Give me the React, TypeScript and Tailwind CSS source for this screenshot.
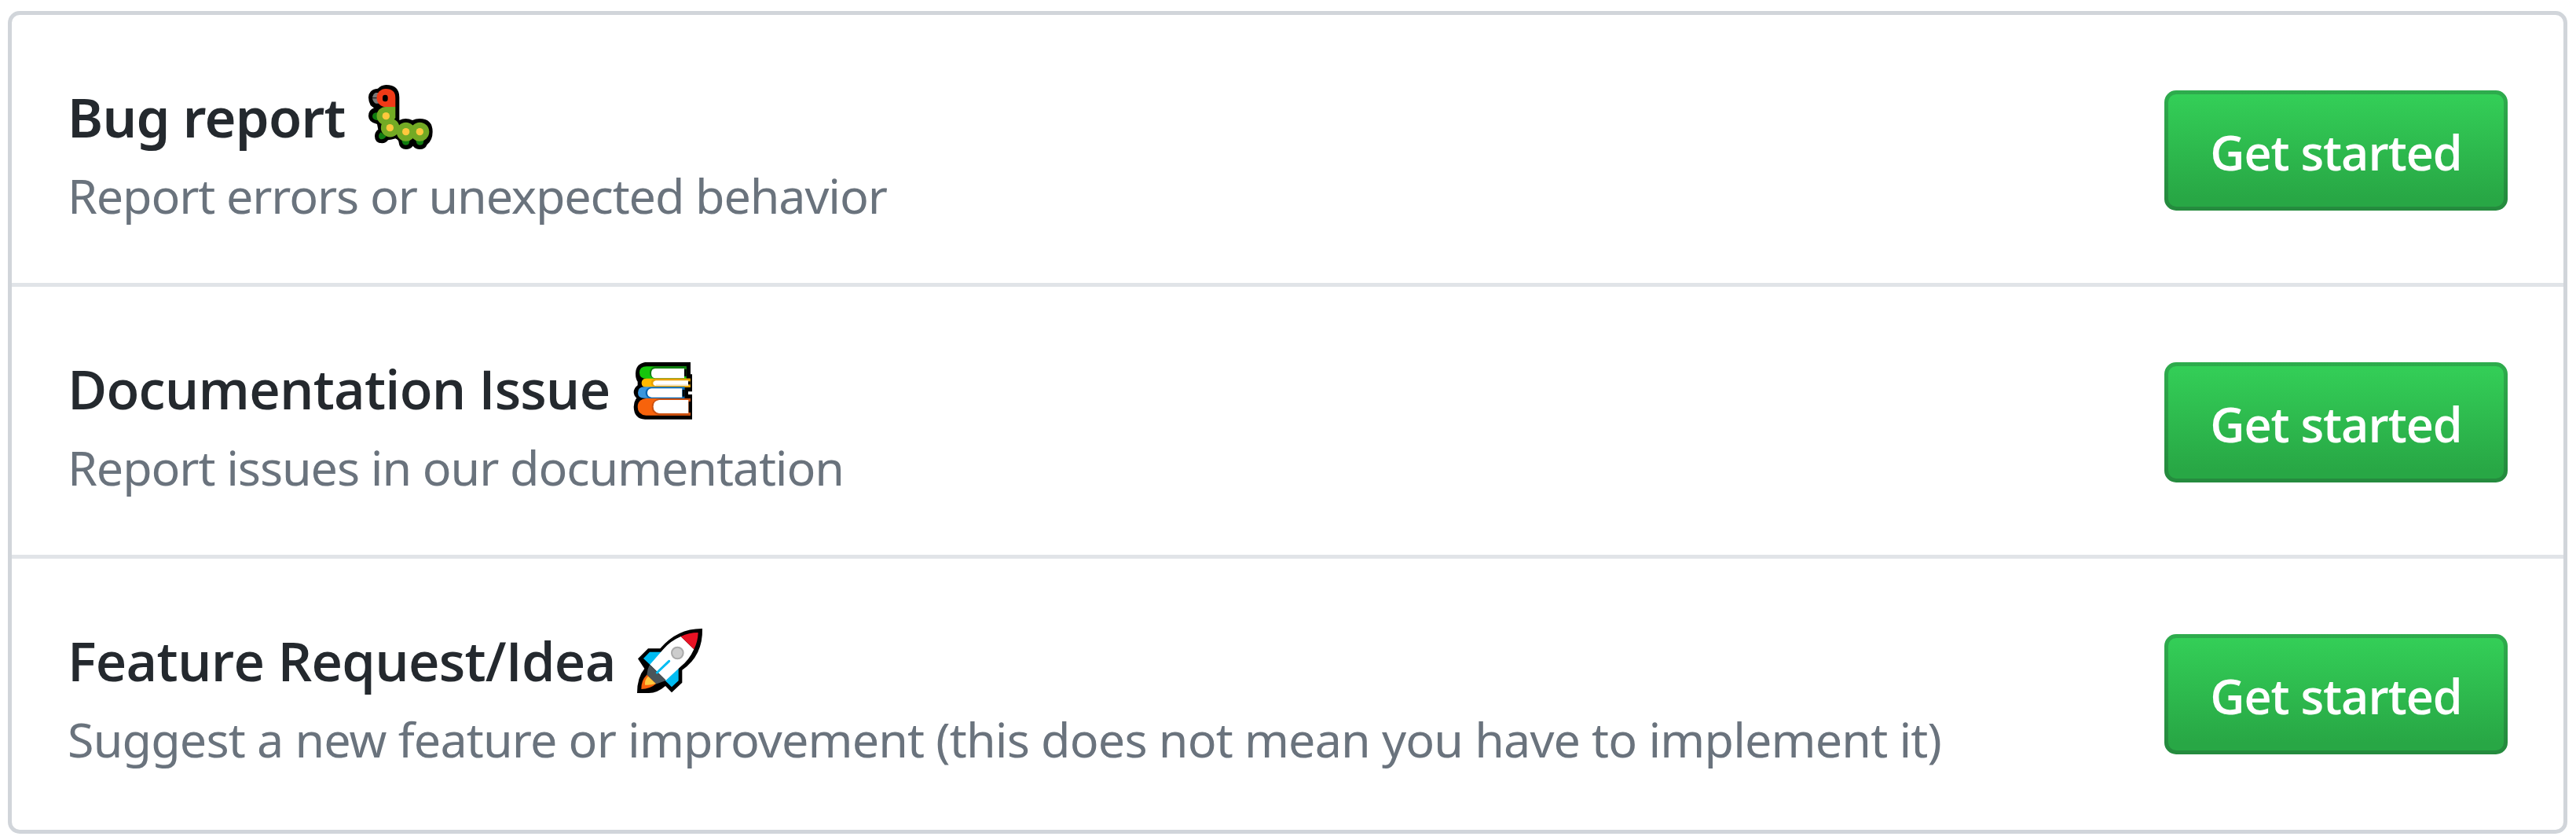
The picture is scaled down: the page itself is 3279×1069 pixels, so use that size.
import type { ReactNode } from "react";

function Caterpillar() {
  return (
    <svg viewBox="54 51 252 252" className="mt-[11px] size-[84px] shrink-0">
      <path d="M124 54a46 46 0 0 0-31 14q-20 2-28 12q-8 8-8 22t8 30q6 6 13 10q-21 8-21 31q0 23 33 31q2 10 4 20q-13 10-13 26q0 27 28 27q14 0 23-12q14-1 28-6q13 6 13 16q3 25 27 25q17 0 27-13q10 13 26 13q21 0 28-18q21-17 21-49q0-50-50-50q-15 0-27 6q-12-6-26-6q-12 0-24 6V102q0-48-51-48Z" />
      <path d="M96 84H84q-11 6-12 20q1 14 13 21h14Z" fill="#777" />
      <path d="M72 104h22" stroke="#222" strokeWidth="4" />
      <path d="M123 69q37 0 37 35v34h-37a34.500 34.500 0 0 1 0-69Z" fill="#f03a17" />
      <rect x="111" y="92" width="20" height="26" rx="10" fill="#000" />
      <path d="M94 160q-22-2-22 14q0 14 23 16Z" fill="#107c10" />
      <path d="M104 235q-15 13-3 25q10 6 24-9Z" fill="#107c10" />
      <path d="M184 260h30q2 24-14 24t-16-24ZM238 260h30q2 24-14 24t-16-24Z" fill="#107c10" />
      <path d="M123 138h37v42l-20 24l-17 3a34.500 34.500 0 0 1 0-69Z" fill="#73aa24" />
      <circle cx="140" cy="218" r="35.500" fill="#73aa24" />
      <circle cx="200" cy="233" r="36" fill="#73aa24" />
      <circle cx="253" cy="233" r="36" fill="#73aa24" />
      <g fill="#ffc83d">
        <circle cx="124" cy="173" r="14" />
        <circle cx="139" cy="218" r="14" />
        <circle cx="200" cy="233" r="14" />
        <circle cx="253" cy="233" r="14" />
      </g>
    </svg>
  );
}

function Books() {
  return (
    <svg viewBox="48 60 228 225" className="mt-[18px] h-[75px] w-[76px] shrink-0">
      <path d="M93 63h174v46h6v66h-15v11h15v95H93q-42-2-43-48q0-20 11-33q-10-8-11-22q0-16 15-27v-14q-8-9-8-31q1-37 36-43Z" />
      <path d="M99 79h152v47H99q-27 0-27-23q0-24 27-24Z" fill="#16c60c" />
      <path d="M140 79h111v11h-8V126H140q-29 0-29-23t29-24Z" fill="#107c10" />
      <path d="M134 87h109v37H134q-17 0-17-19t17-18Z" fill="#fff" />
      <path d="M243 90h8v27h-8Z" />
      <path d="M98 125h168v34H98q-18 0-18-17t18-17Z" fill="#ffb900" />
      <path d="M130 125h136v34H130q-14-4-14-17t14-17Z" fill="#e8a200" />
      <path d="M135 133h124v20H135q-11-2-11-10t11-10Z" fill="#fff" />
      <path d="M135 147h122v6H135Z" fill="#f7ead0" />
      <path d="M258 136h8v12h-8Z" />
      <path d="M90 157h154v43H90q-24 0-24-21t24-22Z" fill="#3a96dd" />
      <path d="M112 158h132v42H112q-17-4-17-20t17-22Z" fill="#0063b1" />
      <path d="M118 163h117v34H118q-16-2-16-17t16-17Z" fill="#fff" />
      <path d="M236 168h9v26h-9Z" />
      <path d="M97 201h170v65H97q-32-3-32-32t32-33Z" fill="#f7630c" />
      <path d="M152 201h115v65H160q-41-1-41-32q0-28 33-33Z" fill="#ca5010" />
      <path d="M147 207h112v51H147q-22-4-22-26t22-25Z" fill="#fff" />
      <path d="M260 213h9v42h-9Z" />
    </svg>
  );
}

function Rocket() {
  return (
    <svg viewBox="48 57 252 252" className="mt-[11px] size-[84px] shrink-0">
      <path d="M297 60q3 103-77 158v48l-40 38l-24-25q-31 27-63 27H48q0-60 28-93L51 175l39-39h46q65-77 161-76Z" />
      <path d="M144 149H96l-24 25l28 26ZM206 211v48l-26 24l-26-26Z" fill="#00bcf2" />
      <path d="M215 90q-42 18-67 49L97 197l61 60l54-50q35-27 53-68Z" fill="#fff" />
      <path d="M215 90q31-15 66-15q-1 34-16 64Z" fill="#e81224" />
      <path d="M96 198l62 60l-39 14l-34-35q1-21 11-39Z" fill="#4a5459" />
      <path d="M85 236l35 35q-23 20-56 20q-1-33 21-55Z" fill="#f7630c" />
      <path d="M90 242l29 28q-19 7-41 5q-2-20 12-33Z" fill="#ffc83d" />
      <circle cx="202" cy="153" r="22" fill="#ccc" stroke="#aaa" strokeWidth="6" />
      <path d="M170 184l-46 44" stroke="#00bcf2" strokeWidth="9" strokeLinecap="round" />
    </svg>
  );
}

type RowProps = { title: ReactNode; icon: ReactNode; description: ReactNode };

function TemplateRow({ title, icon, description }: RowProps) {
  return (
    <li className="flex h-[346px] items-start justify-between border-b-5 border-[#e1e4e8] pr-[71px] pl-[71px] last:border-b-0">
      <div className="pt-[77px] whitespace-nowrap">
        <h3 className="flex h-[105px] items-start text-[68.6px] leading-[105px] font-semibold text-[#24292e]">
          {title}
          {icon}
        </h3>
        <p className="text-[61px] leading-[95px] text-[#6a737d]">{description}</p>
      </div>
      <button className="mt-[96px] h-[153px] w-[437px] shrink-0 rounded-[15px] border-5 border-[rgba(27,31,35,0.2)] bg-[#28a745] bg-[linear-gradient(-180deg,#34d058,#28a745_90%)] bg-origin-border pt-[5px] font-['Open_Sans',sans-serif] text-[61px] leading-[138px] font-semibold tracking-[-1.07px] whitespace-nowrap text-white">
        Get started
      </button>
    </li>
  );
}

export default function App() {
  return (
    <main className="h-[1069px] w-[3279px] bg-white pt-[14px] pl-[10px] font-['Noto_Sans',sans-serif]">
      <ul className="h-[1047px] w-[3258px] overflow-hidden rounded-[15px] border-5 border-[#d1d5da]">
        <TemplateRow
          title={<span className="w-[382px] tracking-[-0.75px]">Bug report</span>}
          icon={<Caterpillar />}
          description={<span className="tracking-[-1.12px]">Report errors or unexpected behavior</span>}
        />
        <TemplateRow
          title={<span className="w-[720px] font-['Open_Sans',sans-serif] tracking-[-0.8px]">Documentation Issue</span>}
          icon={<Books />}
          description={<span className="tracking-[-1.1px]">Report issues in our documentation</span>}
        />
        <TemplateRow
          title={<span className="w-[725px] font-['Open_Sans',sans-serif] tracking-[-0.76px]">Feature Request/Idea</span>}
          icon={<Rocket />}
          description={
            <span className="tracking-[-0.84px]">
              Suggest a new feature or improvement (this does not mean you have to implement it)
            </span>
          }
        />
      </ul>
    </main>
  );
}
